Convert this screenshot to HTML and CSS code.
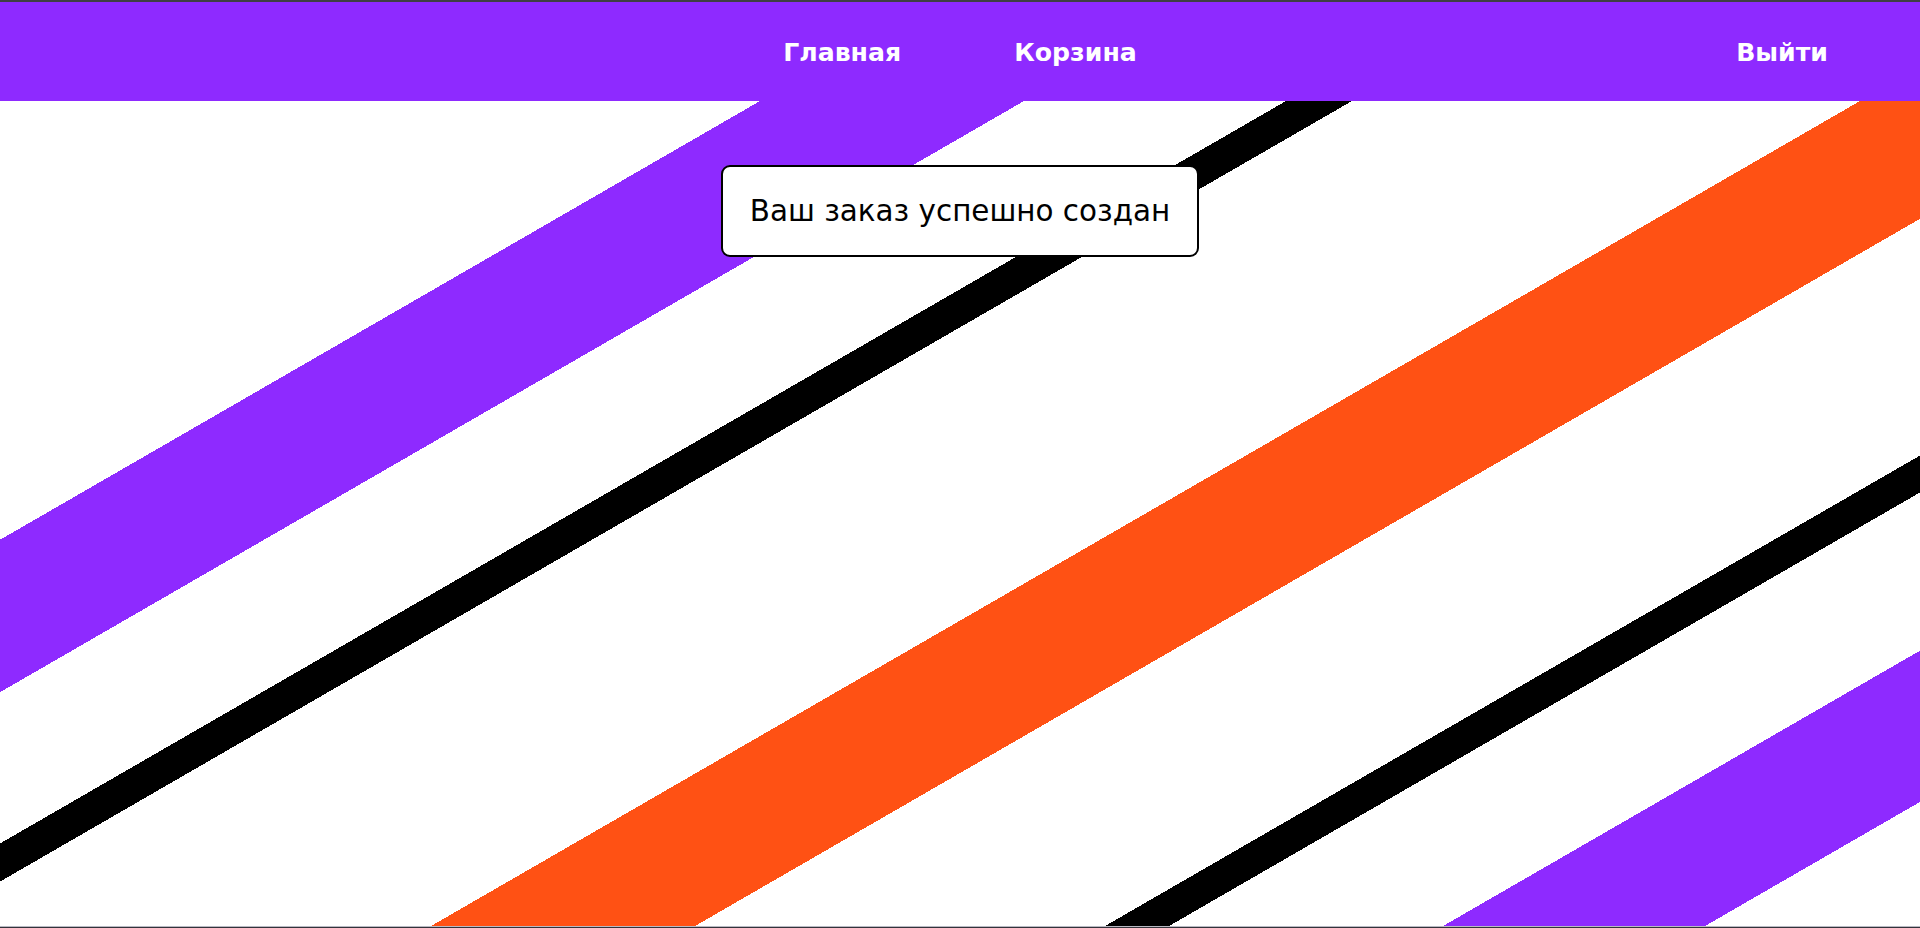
FILE: index.html
```html
<!DOCTYPE html>
<html lang="ru">
<head>
<meta charset="utf-8">
<title>Заказ</title>
<link rel="stylesheet" href="styles.css">
</head>
<body>
<div class="frame">
  <div class="topline"></div>
  <header class="header">
    <div class="side"></div>
    <nav class="nav">
      <a class="nav-link" href="#">Главная</a>
      <a class="nav-link" href="#">Корзина</a>
    </nav>
    <div class="side side-right">
      <a class="nav-link" href="#">Выйти</a>
    </div>
  </header>
  <main class="main">
    <div class="notice">Ваш заказ успешно создан</div>
  </main>
  <div class="bottomline"></div>
</div>
</body>
</html>
```

FILE: styles.css
```css
html, body {
  margin: 0;
  padding: 0;
}

body {
  font-family: "DejaVu Sans", "Noto Sans", sans-serif;
  background: #ffffff;
}

.frame {
  height: 928px;
  display: flex;
  flex-direction: column;
  overflow: hidden;
}

.topline {
  height: 2px;
  background: #3f3f42;
  flex: none;
}

.header {
  height: 99px;
  box-sizing: border-box;
  padding-top: 2px;
  flex: none;
  background: #8e2aff;
  display: grid;
  grid-template-columns: 1fr auto 1fr;
  align-items: center;
}

.nav {
  display: flex;
  gap: 113px;
}

.side-right {
  display: flex;
  justify-content: flex-end;
  padding-right: 92px;
}

.nav-link {
  color: #ffffff;
  text-decoration: none;
  font-weight: bold;
  font-size: 25.2px;
  line-height: 30px;
}

.main {
  flex: 1;
  display: flex;
  justify-content: center;
  align-items: flex-start;
  padding-top: 64px;
  background: linear-gradient(150deg,
    #ffffff 0 380px,
    #8e2aff 380px 512px,
    #ffffff 512px 643px,
    #000000 643px 676px,
    #ffffff 676px 930px,
    #ff5114 930px 1062px,
    #ffffff 1062px 1267px,
    #000000 1267px 1299px,
    #ffffff 1299px 1436px,
    #8e2aff 1436px 1567px,
    #ffffff 1567px);
}

.notice {
  background: #ffffff;
  border: 2px solid #000000;
  border-radius: 9px;
  padding: 27px 27px;
  font-size: 29.4px;
  line-height: 34px;
  color: #000000;
}

.bottomline {
  height: 2px;
  flex: none;
  box-sizing: border-box;
  border-top: 1px solid #b9b9c2;
  background: #33333b;
}
```
